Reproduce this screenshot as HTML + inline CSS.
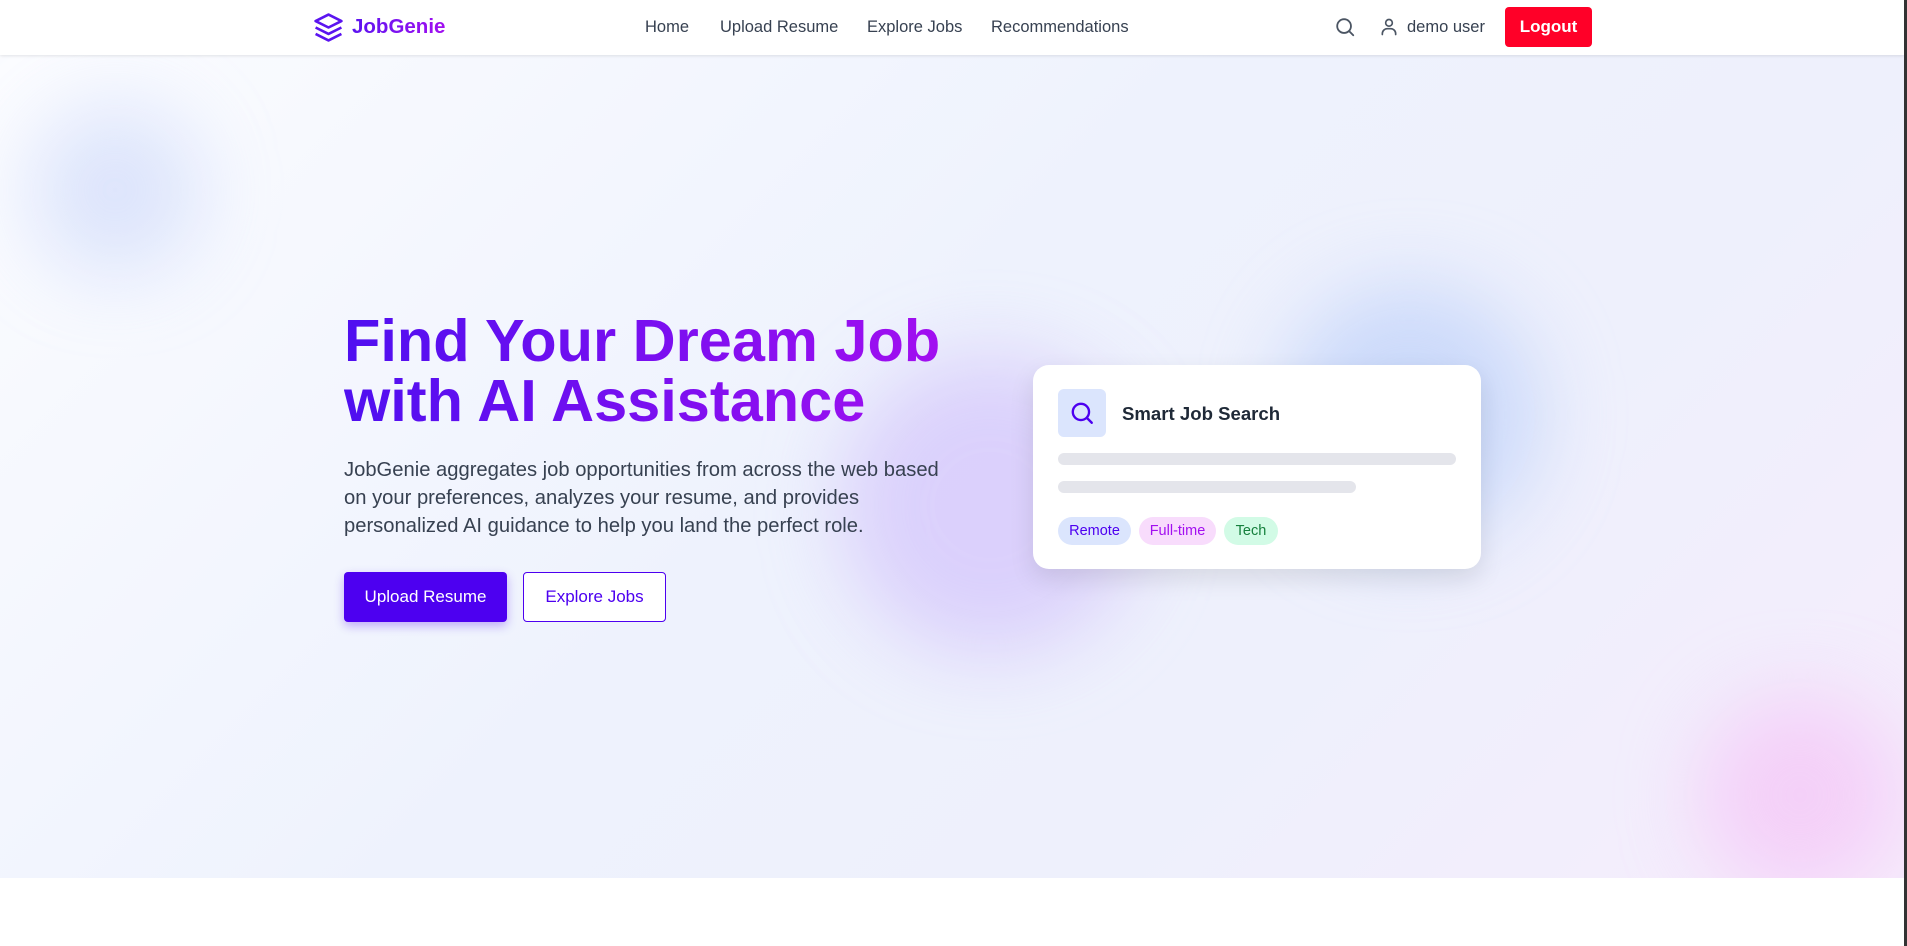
<!DOCTYPE html>
<html><head><meta charset="utf-8"><style>
*{box-sizing:border-box;margin:0;padding:0}
body{width:1907px;height:946px;overflow:hidden;font-family:"Liberation Sans",sans-serif;background:#fff;position:relative}
.nav{position:absolute;left:0;top:0;width:1904px;height:55px;background:#fff;box-shadow:0 1px 3px rgba(0,0,0,.1);z-index:5}
.vline{position:absolute;left:1904px;top:0;width:3px;height:946px;background:#333;z-index:6}
.hero{position:absolute;left:0;top:55px;width:1904px;height:823px;overflow:hidden;background:linear-gradient(135deg,#fbfcff 0%,#eef2fd 45%,#eef0fc 70%,#f6ecfc 100%)}
.blob{position:absolute;border-radius:50%;filter:blur(40px)}
.t{position:absolute;white-space:nowrap}
.navlink{position:absolute;top:18px;font-size:16.5px;color:#374151}
h1{position:absolute;left:344px;top:311px;font-size:59.5px;line-height:60px;font-weight:bold;background:linear-gradient(90deg,#4f0ff0,#a20ff0);-webkit-background-clip:text;color:transparent;white-space:nowrap}
p.d{position:absolute;left:344px;top:456px;width:600px;font-size:20.2px;line-height:28px;color:#374151}
.btn{position:absolute;top:572px;height:50px;border-radius:4px;font-size:17px;display:flex;align-items:center;justify-content:center}
.card{position:absolute;left:1033px;top:365px;width:448px;height:204px;background:#fff;border-radius:16px;box-shadow:0 10px 25px rgba(0,0,0,.1)}
.bar{position:absolute;left:25px;height:12px;border-radius:6px;background:#e4e5eb}
.tag{position:absolute;top:152px;height:28px;border-radius:14px;font-size:14.5px;display:flex;align-items:center;justify-content:center}
</style></head><body>
<div class="nav">
<svg style="position:absolute;left:313px;top:12px" width="31" height="31" viewBox="0 0 24 24" fill="none" stroke="#5b14f0" stroke-width="2" stroke-linejoin="round"><path d="M12 2 2 7l10 5 10-5-10-5z"/><path d="M2 17l10 5 10-5"/><path d="M2 12l10 5 10-5"/></svg>
<div class="t" style="left:352px;top:15px;font-size:20.5px;font-weight:bold;background:linear-gradient(90deg,#5b14f0,#a20ff0);-webkit-background-clip:text;color:transparent">JobGenie</div>
<div class="navlink" style="left:645px">Home</div>
<div class="navlink" style="left:720px">Upload Resume</div>
<div class="navlink" style="left:867px">Explore Jobs</div>
<div class="navlink" style="left:991px">Recommendations</div>
<svg style="position:absolute;left:1334px;top:16px" width="22" height="22" viewBox="0 0 24 24" fill="none" stroke="#4b5563" stroke-width="2" stroke-linecap="round"><circle cx="11" cy="11" r="7.5"/><path d="M21 21l-4.5-4.5"/></svg>
<svg style="position:absolute;left:1379px;top:16px" width="20" height="22" viewBox="0 0 24 24" fill="none" stroke="#4b5563" stroke-width="2" stroke-linecap="round"><circle cx="12" cy="7" r="4"/><path d="M4 21v-1a6 6 0 0 1 6-6h4a6 6 0 0 1 6 6v1"/></svg>
<div class="t" style="left:1407px;top:18px;font-size:16.5px;color:#374151">demo user</div>
<div style="position:absolute;left:1505px;top:7px;width:87px;height:40px;background:#ff0028;border-radius:4px;color:#fff;font-weight:bold;font-size:17px;display:flex;align-items:center;justify-content:center">Logout</div>
</div>
<div class="vline"></div>
<div class="hero">
<div class="blob" style="left:30px;top:50px;width:170px;height:170px;background:rgba(170,190,245,.35)"></div>
<div class="blob" style="left:840px;top:300px;width:300px;height:300px;background:rgba(190,160,250,.4)"></div>
<div class="blob" style="left:1280px;top:230px;width:260px;height:260px;background:rgba(170,195,250,.5)"></div>
<div class="blob" style="left:1700px;top:640px;width:200px;height:200px;background:rgba(245,180,245,.5)"></div>
</div>
<h1>Find Your Dream Job<br>with AI Assistance</h1>
<p class="d">JobGenie aggregates job opportunities from across the web based on your preferences, analyzes your resume, and provides personalized AI guidance to help you land the perfect role.</p>
<div class="btn" style="left:344px;width:163px;background:#4d00f0;color:#fff;box-shadow:0 4px 10px rgba(77,0,240,.3)">Upload Resume</div>
<div class="btn" style="left:523px;width:143px;border:1px solid #4d00f0;color:#4d00f0;background:#fff">Explore Jobs</div>
<div class="card">
<div style="position:absolute;left:25px;top:24px;width:48px;height:48px;border-radius:6px;background:#dbe5fd"></div>
<svg style="position:absolute;left:36px;top:35px" width="26" height="26" viewBox="0 0 24 24" fill="none" stroke="#4d00f0" stroke-width="2.2" stroke-linecap="round"><circle cx="11" cy="11" r="7.5"/><path d="M21 21l-4.5-4.5"/></svg>
<div class="t" style="left:89px;top:38px;font-size:18.6px;font-weight:bold;color:#1f2937">Smart Job Search</div>
<div class="bar" style="top:88px;width:398px"></div>
<div class="bar" style="top:116px;width:298px"></div>
<div class="tag" style="left:25px;width:73px;background:#dbe5fd;color:#4d00f0">Remote</div>
<div class="tag" style="left:106px;width:77px;background:#f8dcfc;color:#a20ff0">Full-time</div>
<div class="tag" style="left:191px;width:54px;background:#d2fbe6;color:#15803d">Tech</div>
</div>
</body></html>
